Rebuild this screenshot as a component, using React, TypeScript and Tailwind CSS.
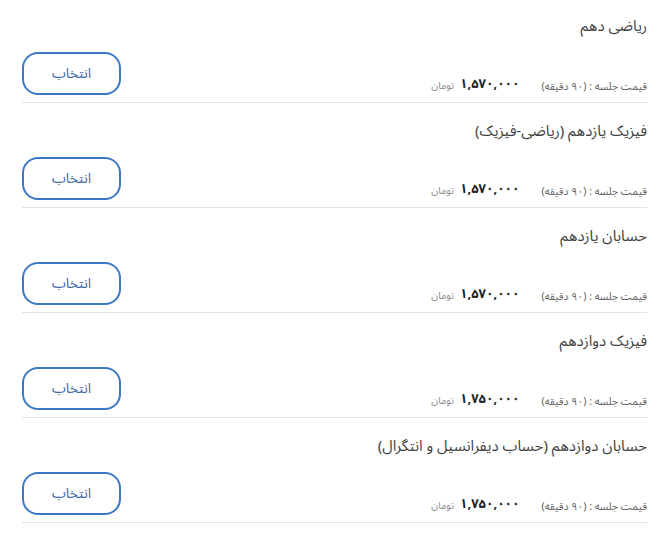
import React from 'react';

type Course = {
  title: string;
  price: string;
};

const courses: Course[] = [
  { title: 'ریاضی دهم', price: '۱,۵۷۰,۰۰۰' },
  { title: 'فیزیک یازدهم (ریاضی-فیزیک)', price: '۱,۵۷۰,۰۰۰' },
  { title: 'حسابان یازدهم', price: '۱,۵۷۰,۰۰۰' },
  { title: 'فیزیک دوازدهم', price: '۱,۷۵۰,۰۰۰' },
  { title: 'حسابان دوازدهم (حساب دیفرانسیل و انتگرال)', price: '۱,۷۵۰,۰۰۰' },
];

const CourseRow: React.FC<{ course: Course }> = ({ course }) => {
  return (
    <div className="border-b border-[#e3e3e3] pt-4 pb-[7px] first:pt-[14px]">
      <h3 className="h-6 text-[15px] leading-6 text-[#3f3f3f]">{course.title}</h3>
      <div className="mt-[14px] flex items-end justify-between">
        <div className="flex items-end">
          <span className="text-[10.5px] leading-4 text-[#5f5f5f]">قیمت جلسه : (۹۰ دقیقه)</span>
          <span className="mr-[22px] mb-[1px] text-[13px] font-bold leading-5 text-[#222]" dir="ltr">
            {course.price}
          </span>
          <span className="mr-[6px] mb-[1px] text-[10px] leading-4 text-[#888]">تومان</span>
        </div>
        <button className="h-[43px] w-[99px] rounded-[16px] border-2 border-[#3d78c7] bg-white text-[14px] text-[#3f6aa6]">
          انتخاب
        </button>
      </div>
    </div>
  );
};

export default function App() {
  return (
    <div
      dir="rtl"
      className="min-h-screen bg-white pl-[22px] pr-[15px]"
      style={{ fontFamily: '"Noto Sans Arabic", "DejaVu Sans", sans-serif' }}
    >
      {courses.map((c) => (
        <CourseRow key={c.title} course={c} />
      ))}
    </div>
  );
}
